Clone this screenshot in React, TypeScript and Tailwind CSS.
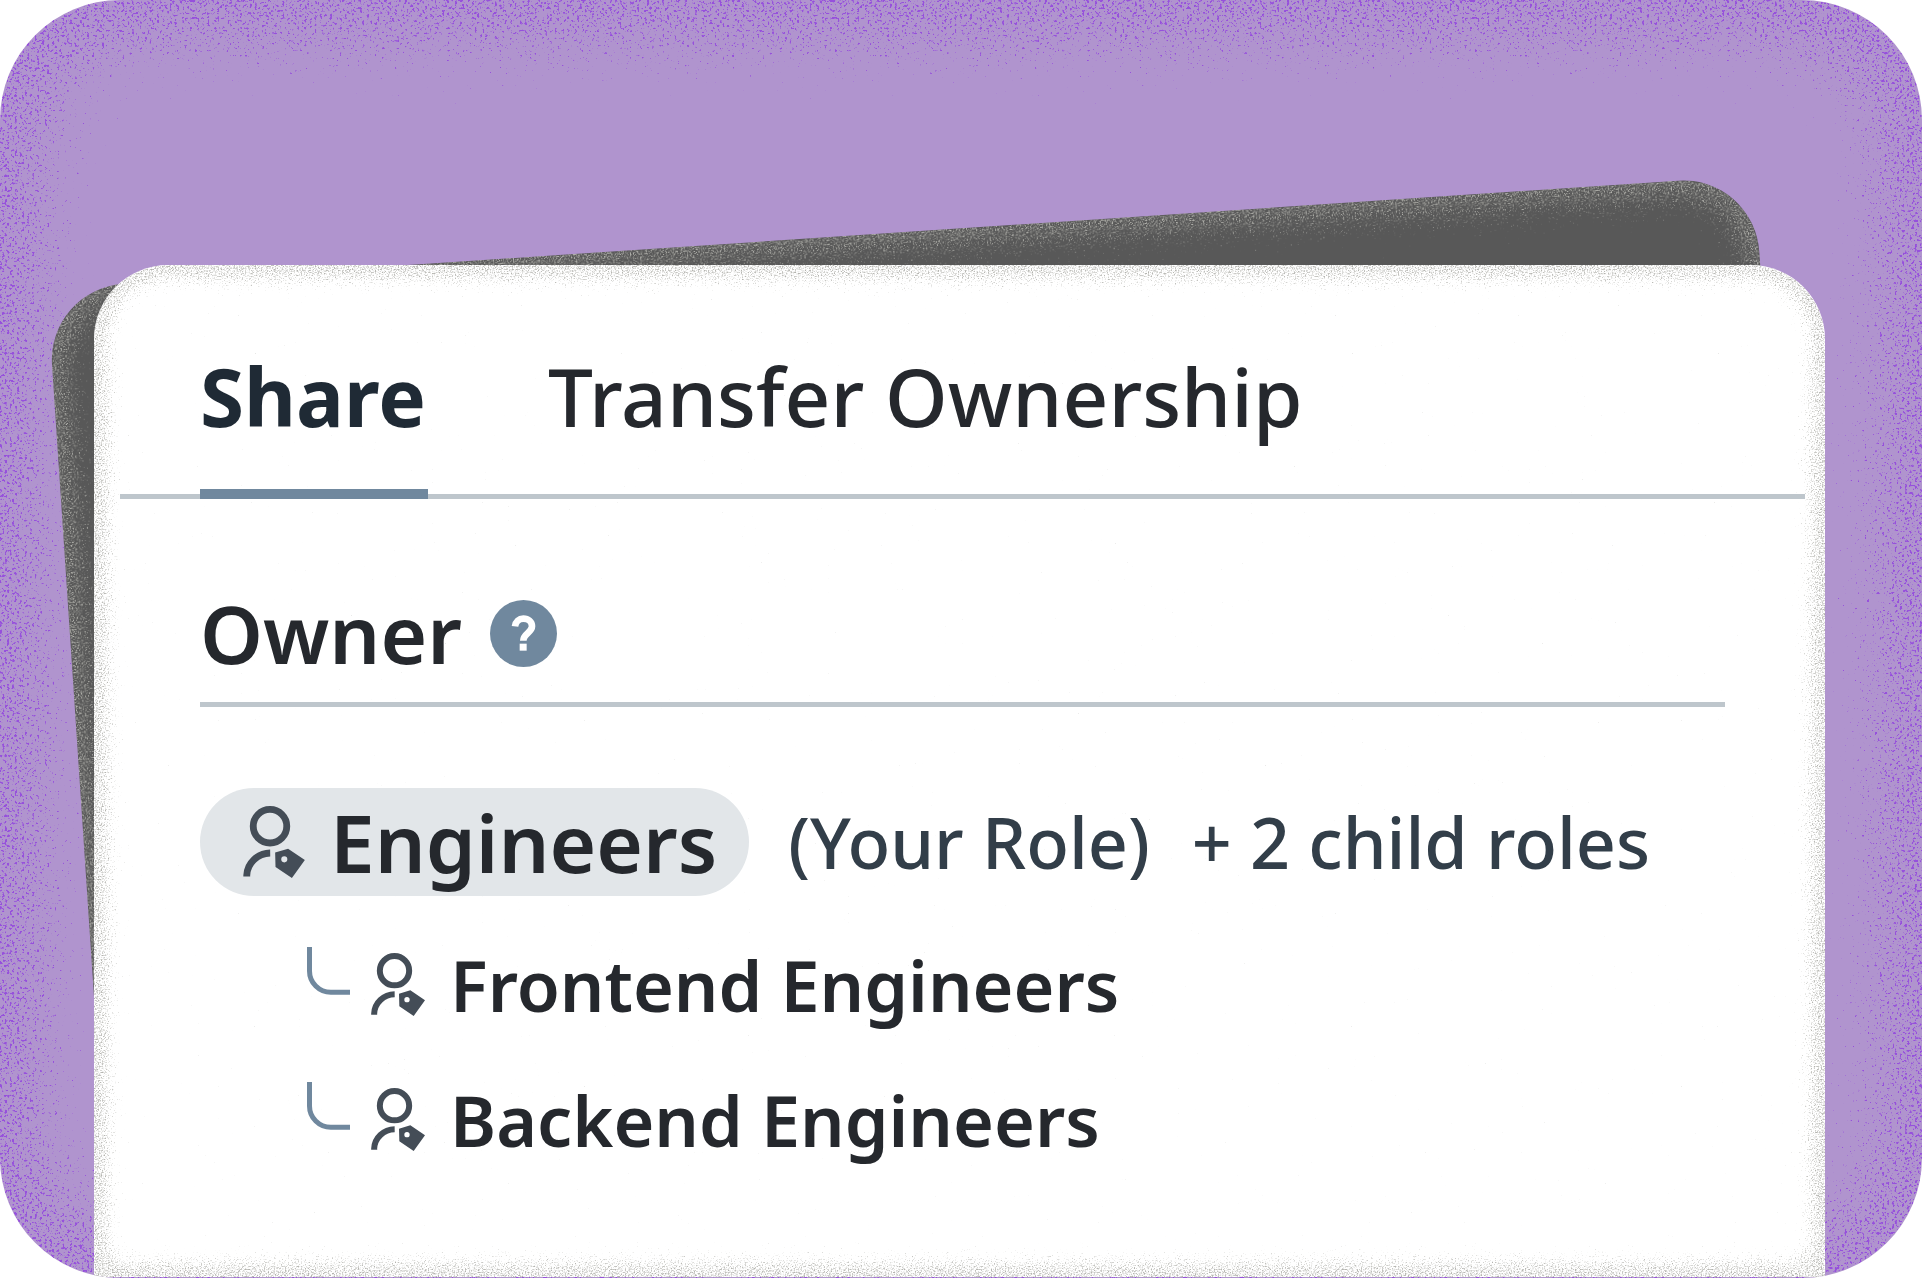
import React from "react";

type GrainProps = {
  id: string;
  frequency: string;
  color: string;
  slope: number;
  threshold: number;
  seed: number;
};

/** Turns a soft inner shadow into scattered speckles of one colour. */
function GrainFilter({ id, frequency, color, slope, threshold, seed }: GrainProps) {
  return (
    <filter id={id} x="0" y="0" width="100%" height="100%" colorInterpolationFilters="sRGB">
      <feTurbulence type="fractalNoise" baseFrequency={frequency} numOctaves={2} seed={seed} result="noise" />
      <feColorMatrix in="noise" type="matrix" values="0 0 0 0 0  0 0 0 0 0  0 0 0 0 0  1 0 0 0 0" result="grain" />
      <feComposite
        in="SourceAlpha"
        in2="grain"
        operator="arithmetic"
        k1={0}
        k2={slope * 0.42}
        k3={slope}
        k4={slope * -threshold}
        result="speckle"
      />
      <feFlood floodColor={color} />
      <feComposite in2="speckle" operator="in" />
    </filter>
  );
}

function RoleIcon({ className }: { className: string }) {
  return (
    <svg viewBox="0 0 162 189" className={className} fill="none" aria-hidden="true">
      <circle cx="70.500" cy="53" r="44" stroke="#444d57" strokeWidth="18" />
      <path d="M9.500 185v-3C10.500 150 38 124 71 123.500" stroke="#444d57" strokeWidth="18" />
      <path
        fillRule="evenodd"
        fill="#444d57"
        d="M84 122 118 112 162 142 128 189 85 160ZM108 132a8 8 0 1 0 0 16a8 8 0 1 0 0-16Z"
      />
    </svg>
  );
}

function Branch() {
  return (
    <svg viewBox="0 0 129 144" className="mt-[30px] h-[48px] w-[43px] self-start" fill="none" aria-hidden="true">
      <path d="M7.500 0V72a64 64 0 0 0 64 64H129" stroke="#70889e" strokeWidth="15" />
    </svg>
  );
}

function HelpIcon() {
  return (
    <svg viewBox="0 0 201 201" className="size-[67px]" fill="none" aria-hidden="true">
      <circle cx="100.500" cy="100.500" r="100.500" fill="#70889e" />
      <path
        d="M75 79C77 64 87 56 100 56c15 0 26 9 26 23 0 19-26 21-26 43"
        stroke="#fff"
        strokeWidth="20"
      />
      <path d="M89 131h21v21H89z" fill="#fff" />
    </svg>
  );
}

const childRoles = ["Frontend Engineers", "Backend Engineers"];

export default function App() {
  return (
    <main
      className="relative flex min-h-screen flex-col overflow-hidden rounded-[120px] bg-[#b094ce] pt-[265px] pr-[97px] pb-px pl-[94px] text-[#25282d]"
      style={{ fontFamily: '"Noto Sans", sans-serif' }}
    >
      <svg className="absolute size-0" aria-hidden="true">
        <defs>
          <GrainFilter id="grain-purple" frequency="0.4" color="#9650dc" slope={10} threshold={0.95} seed={4} />
          <GrainFilter id="grain-light" frequency="0.7" color="#b4b4ae" slope={4} threshold={0.85} seed={9} />
          <GrainFilter id="grain-paper" frequency="0.7" color="#b4b4af" slope={3} threshold={0.83} seed={2} />
        </defs>
      </svg>
      <div className="pointer-events-none absolute inset-0 rounded-[120px] shadow-[inset_0_0_90px_72px_#000] [filter:url(#grain-purple)]" />

      <div className="relative isolate flex flex-1 flex-col">
        <div className="absolute top-[24px] -left-[47px] -z-10 h-[900px] w-[calc(100%-20px)] origin-top-left -rotate-[3.8deg] rounded-[76px] bg-[#585858]">
          <div className="size-full rounded-[76px] shadow-[inset_0_0_36px_28px_#000] [filter:url(#grain-light)]" />
        </div>

        <section className="relative flex-1 rounded-t-[74px] bg-white pt-[91px] pb-[89px]">
          <div className="pointer-events-none absolute inset-0 rounded-t-[74px] shadow-[inset_0_0_20px_20px_#000] [filter:url(#grain-paper)]" />

          <div role="tablist" className="relative mr-[20px] ml-[26px] flex gap-[120px] border-b-[5px] border-[#bec6cc] pl-[80px] text-[80px] leading-[80px]">
            <button role="tab" aria-selected="true" className="-mb-[5px] border-b-[10px] border-[#70889e] pr-[2px] pb-[53px] font-bold text-[#1f2a35]">
              Share
            </button>
            <button role="tab" aria-selected="false" className="-mb-[5px] pb-[63px] font-medium">
              Transfer Ownership
            </button>
          </div>

          <div className="relative mt-[94px] mr-[100px] ml-[106px]">
            <div className="flex items-center gap-[28px] border-b-[5px] border-[#bec6cc] pb-[29px]">
              <h2 className="text-[80px] leading-[80px] font-semibold">Owner</h2>
              <button aria-label="About owners">
                <HelpIcon />
              </button>
            </div>

            <div className="mt-[81px] flex items-center text-[70px] leading-[80px] font-medium whitespace-nowrap text-[#323e49]">
              <span className="flex h-[108px] items-center gap-[25px] rounded-full bg-[#e2e6e9] pr-[32px] pl-[43px] text-[80px] font-semibold text-[#25282d]">
                <RoleIcon className="h-[72px] w-[62px]" />
                Engineers
              </span>
              <span className="ml-[39px]">(Your Role)</span>
              <span className="ml-[42px]">+ 2 child roles</span>
            </div>

            <ul className="mt-[21px] pl-[107px]">
              {childRoles.map((role) => (
                <li key={role} className="flex h-[135px] items-center text-[70px] leading-[80px] font-semibold whitespace-nowrap">
                  <Branch />
                  <RoleIcon className="mr-[25px] ml-[21px] h-[63px] w-[54px]" />
                  {role}
                </li>
              ))}
            </ul>
          </div>
        </section>
      </div>
    </main>
  );
}
